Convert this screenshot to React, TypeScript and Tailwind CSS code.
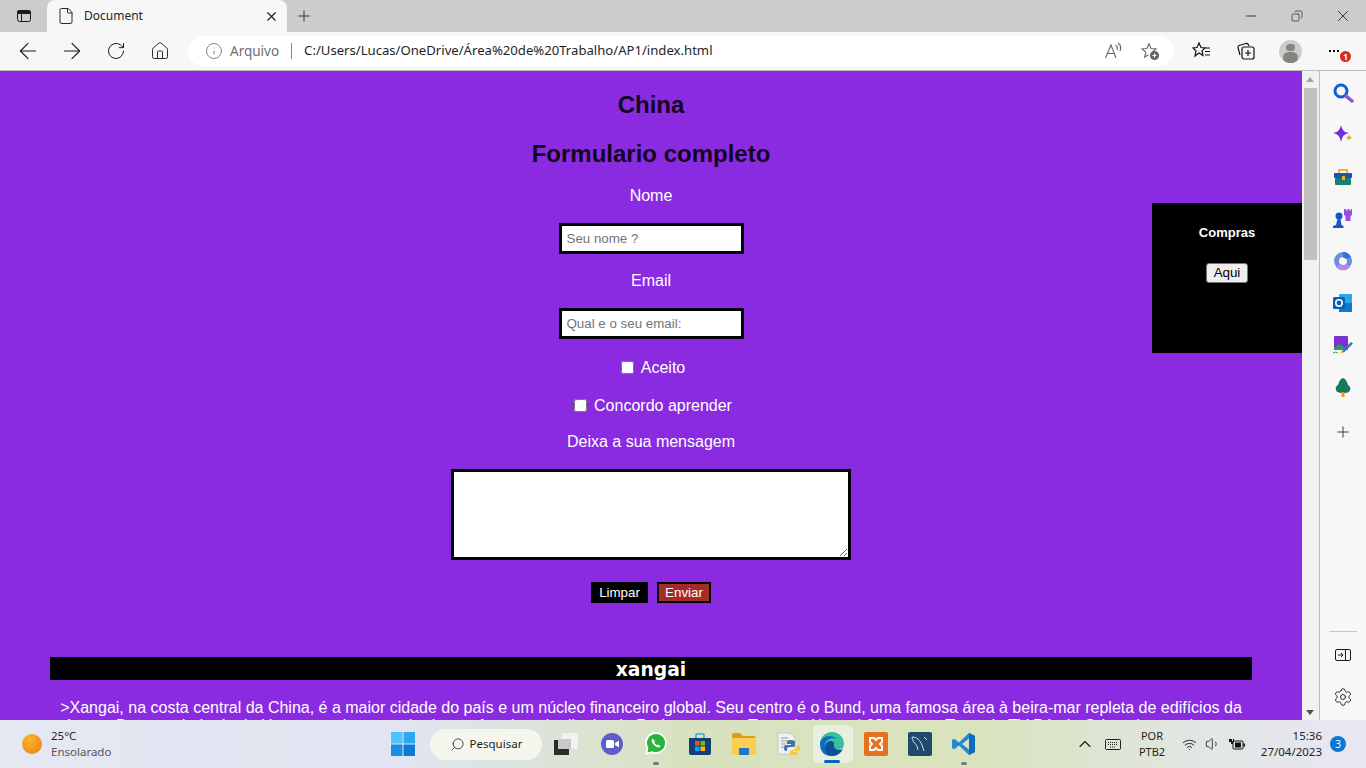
import type { ReactNode } from 'react';
import {
  ArrowLeft,
  ArrowRight,
  ChevronUp,
  Copy,
  File,
  Home,
  Info,
  Minus,
  Plus,
  RotateCw,
  Search,
  Settings,
  Volume1,
  Wifi,
  X,
} from 'lucide-react';

const uiFont = "font-['Noto_Sans','Open_Sans',sans-serif]";

function ToolButton({ children }: { children: ReactNode }) {
  return <div className="flex h-[38px] w-11 shrink-0 items-center justify-center text-[#1b1b1b]">{children}</div>;
}

function TabBar() {
  return (
    <div className="flex h-8 shrink-0 bg-[#cccccc]">
      <div className="flex w-[47px] items-center justify-center">
        <svg width="16" height="16" viewBox="0 0 16 16" fill="none" stroke="#1b1b1b">
          <rect x="1.5" y="2.5" width="13" height="11" rx="2" />
          <path d="M2 5.5h12M5.5 5v8" />
          <rect x="2" y="3" width="12" height="2.5" fill="#1b1b1b" />
        </svg>
      </div>
      <div className="flex h-8 w-60 items-center rounded-t-lg bg-[#f7f7f7] pl-[10px] pr-[8px]">
        <File size={18} strokeWidth={1.25} className="text-[#1b1b1b]" />
        <span className="ml-[9px] flex-1 text-xs text-[#1f1f1f]">Document</span>
        <X size={15} strokeWidth={1.75} className="text-[#1b1b1b]" />
      </div>
      <div className="ml-[8px] flex w-[18px] items-center justify-center">
        <Plus size={22} strokeWidth={1.1} className="text-[#1b1b1b]" />
      </div>
      <div className="ml-auto flex text-[#1b1b1b]">
        <div className="flex w-[46px] items-center justify-center">
          <Minus size={16} strokeWidth={1.25} />
        </div>
        <div className="flex w-[46px] items-center justify-center">
          <Copy size={12} strokeWidth={1.25} className="-scale-x-100" />
        </div>
        <div className="flex w-[46px] items-center justify-center">
          <X size={18} strokeWidth={1.1} />
        </div>
      </div>
    </div>
  );
}

function ToolBar() {
  return (
    <div className="flex h-[38px] shrink-0 items-center bg-[#f7f7f7] pl-[6px]">
      <ToolButton>
        <ArrowLeft size={26} strokeWidth={1} />
      </ToolButton>
      <ToolButton>
        <ArrowRight size={26} strokeWidth={1} />
      </ToolButton>
      <ToolButton>
        <RotateCw size={20} strokeWidth={1.2} />
      </ToolButton>
      <ToolButton>
        <Home size={20} strokeWidth={1.1} />
      </ToolButton>
      <div className="ml-[6px] flex h-[30px] w-[986px] shrink-0 items-center rounded-full bg-white pl-[17px] pr-[14px]">
        <Info size={18} strokeWidth={1.1} className="text-[#6f6f6f]" />
        <span className="ml-[7px] text-[13.5px] text-[#6f6f6f]">Arquivo</span>
        <span className="ml-3 h-4 w-px bg-[#8a8a8a]" />
        <span className="ml-3 text-[13.13px] text-[#1f1f1f]">C:/Users/Lucas/OneDrive/Área%20de%20Trabalho/AP1/index.html</span>
        <div className="ml-auto flex items-center gap-[18px]">
          <svg width="18" height="18" viewBox="0 0 18 18" fill="none" stroke="#666" strokeWidth="1.1">
            <path d="M1.5 16 7 3l5 13M3.5 11.5h7M11.500 3c2 1 2 3.500 1.500 5M14 1c3 2 3 5.500 2 8" />
          </svg>
          <svg width="20" height="20" viewBox="0 0 20 20" fill="none" stroke="#666" strokeWidth="1.1">
            <path d="M9 2.500 11 7.500l5 .4-3.800 3.200" />
            <path d="M9 2.500 7 7.500l-5 .4 3.800 3.200L4.700 16l3.800-2.300" />
            <circle cx="14.500" cy="14.500" r="4" fill="#666" />
            <path d="M14.500 12.500v4M12.500 14.500h4" stroke="#fff" />
          </svg>
        </div>
      </div>
      <div className="ml-[6px] flex items-center">
        <ToolButton>
          <svg width="20" height="20" viewBox="0 0 20 20" fill="none" stroke="#111" strokeWidth="1.2">
            <path d="M7 2 9 6.500l4 .4-3 3 1 4.500-4-2.400-4 3 1-5-3-3 4-.5z" />
            <path d="M13 7h5M13 10.500h5M13 14h5" />
          </svg>
        </ToolButton>
        <ToolButton>
          <svg width="20" height="20" viewBox="0 0 20 20" fill="none" stroke="#111" strokeWidth="1.2">
            <path d="M4 14 2 6.500q-.3-1.500 1-2L10 2.500q1.500-.3 2.200 1L13 5" />
            <rect x="6" y="6" width="12" height="12" rx="2" />
            <path d="M12 9v6M9 12h6" />
          </svg>
        </ToolButton>
        <ToolButton>
          <div className="flex h-[23px] w-[23px] flex-col items-center overflow-hidden rounded-full bg-[#cfcdca]">
            <div className="mt-1 h-[9px] w-[9px] rounded-full bg-[#868481]" />
            <div className="mt-[1px] h-3 w-[15px] rounded-full bg-[#868481]" />
          </div>
        </ToolButton>
        <ToolButton>
          <div className="relative flex items-center gap-[2px]">
            <span className="h-[2px] w-[2px] bg-black" />
            <span className="h-[2px] w-[2px] bg-black" />
            <span className="h-[2px] w-[2px] bg-black" />
            <span className="absolute -right-[12px] top-[1px] flex h-[11px] w-[11px] items-center justify-center rounded-full bg-[#d92a20] text-[9px] font-bold leading-none text-white">
              1
            </span>
          </div>
        </ToolButton>
      </div>
    </div>
  );
}

function PageContent() {
  return (
    <main className="relative h-full flex-1 overflow-hidden bg-[#8a2be2] pt-5 text-center font-['Liberation_Sans',Arial,sans-serif] text-base text-white">
      <h2 className="text-2xl font-bold leading-[27px] text-[#12061c]">China</h2>
      <h2 className="mt-[22px] text-2xl font-bold leading-[27px] text-[#12061c]">Formulario completo</h2>
      <p className="mt-5 leading-[18px]">Nome</p>
      <input
        className="mx-auto mt-[18px] block h-[31px] w-[185px] border-[3px] border-black bg-white px-[5px] pb-[1px] text-[13.33px] text-black placeholder:text-[#757575]"
        placeholder="Seu nome ?"
      />
      <p className="mt-[18px] leading-[18px]">Email</p>
      <input
        className="mx-auto mt-[18px] block h-[31px] w-[185px] border-[3px] border-black bg-white px-[5px] pb-[1px] text-[13.33px] text-black placeholder:text-[#757575]"
        placeholder="Qual e o seu email:"
      />
      <label className="mt-5 flex h-[18px] items-center justify-center gap-[7px] leading-[18px]">
        <input type="checkbox" className="-mt-[2px] ml-1 h-[13px] w-[13px]" />
        Aceito
      </label>
      <label className="mt-5 flex h-[18px] items-center justify-center gap-[7px] leading-[18px]">
        <input type="checkbox" className="-mt-[2px] ml-1 h-[13px] w-[13px]" />
        Concordo aprender
      </label>
      <p className="mt-[18px] leading-[18px]">Deixa a sua mensagem</p>
      <textarea className="mx-auto mt-[18px] block h-[91px] w-[400px] border-[3px] border-black bg-white" />
      <div className="mt-[22px] flex justify-center gap-[9px]">
        <button className="h-[21px] w-[57px] border-2 border-black bg-black text-[13.33px] leading-none text-white">Limpar</button>
        <button className="h-[21px] w-[54px] border-2 border-black bg-[#a52a2a] text-[13.33px] leading-none text-white">Enviar</button>
      </div>
      <h3 className="mx-[50px] mt-[54px] h-[23px] bg-black font-['DejaVu_Sans',sans-serif] text-[18.72px] font-bold leading-[25px] text-white">
        xangai
      </h3>
      <p className="mx-[60px] mt-[19px] leading-[18.4px]">
        &gt;Xangai, na costa central da China, é a maior cidade do país e um núcleo financeiro global. Seu centro é o Bund, uma famosa área à beira-mar repleta de edifícios da
        época. Do outro lado do rio Huangpu, situa-se o horizonte futurista do distrito de Pudong, com a Torre de Xangai 632 m, e a Torre de TV Pérola Oriental e arquitetura.
      </p>
      {/* painel fixo de compras */}
      <aside className="absolute right-0 top-[132px] h-[150px] w-[150px] bg-black pt-[22px] text-white">
        <p className="text-[13px] font-bold leading-[15px]">Compras</p>
        <button className="mt-[23px] h-5 w-[42px] rounded-[3px] border border-[#767676] bg-[#efefef] pb-[1px] text-[13.33px] leading-none text-black">Aqui</button>
      </aside>
    </main>
  );
}

function Scrollbar() {
  return (
    <div className="flex h-full w-[18px] shrink-0 flex-col items-center border-r border-[#bdbdbd] bg-[#f1f1f1] pr-[1px]">
      <div className="mt-[6px] h-0 w-0 border-x-[4px] border-b-[5px] border-x-transparent border-b-[#a3a3a3]" />
      <div className="mt-[6px] h-[172px] w-[13px] bg-[#c1c1c1]" />
      <div className="mb-[5px] mt-auto h-0 w-0 border-x-[4px] border-t-[5px] border-x-transparent border-t-[#505050]" />
    </div>
  );
}

function Sidebar() {
  return (
    <div className="flex h-full w-[46px] shrink-0 flex-col items-center bg-[#f7f7f7] pt-[11px]">
      <div className="flex flex-col items-center gap-[20px]">
        <svg width="22" height="22" viewBox="0 0 22 22" fill="none">
          <circle cx="9" cy="9" r="6" stroke="#0f5fd0" strokeWidth="3" />
          <path d="m14 14 6 5" stroke="#8a4fe0" strokeWidth="3.500" strokeLinecap="round" />
        </svg>
        <svg width="22" height="22" viewBox="0 0 22 22">
          <path d="M9 1q1 7 8 8-7 1-8 9-1-8-8-9 7-1 8-8z" fill="#6d2fe0" />
          <path d="M17 10q.4 3 3.500 3.500-3 .5-3.500 3.500-.5-3-3.500-3.500 3-.5 3.500-3.500z" fill="#f6a81c" />
        </svg>
        <svg width="22" height="22" viewBox="0 0 22 22">
          <path d="M7 7V4h8v3" fill="none" stroke="#e3a21a" strokeWidth="1.500" />
          <rect x="2" y="7" width="18" height="5" rx="1" fill="#1556b8" />
          <rect x="3" y="12" width="16" height="7" rx="1" fill="#16806e" />
          <rect x="10" y="10" width="3" height="4" fill="#f2b21e" />
        </svg>
        <svg width="22" height="22" viewBox="0 0 22 22">
          <path d="M12 1h2v1.500h1.500V1h2v1.500H19V1h1v6l-1.500 1v5h-5V8L12 7V1z" fill="#9a4be8" />
          <circle cx="7" cy="8" r="3.500" fill="#1556c8" />
          <path d="M5.500 11h3l1 6 2 1v2H1v-2l3-1z" fill="#1556c8" />
        </svg>
        <svg width="22" height="22" viewBox="0 0 22 22" fill="none">
          <circle cx="11" cy="11" r="6.500" stroke="#6b8fe0" strokeWidth="5" />
          <path d="M11 2a9 9 0 0 1 8 5l-5 2a3.500 3.500 0 0 0-3-1.500z" fill="#2f6fd8" />
          <path d="M4 17a9 9 0 0 0 14 0l-4-3a3.500 3.500 0 0 1-5 0z" fill="#b58ae6" />
        </svg>
        <svg width="22" height="22" viewBox="0 0 22 22">
          <rect x="7" y="2" width="13" height="18" rx="1" fill="#28a8ea" />
          <path d="M7 11h13v9H7z" fill="#0f78d4" />
          <rect x="1" y="5" width="12" height="12" rx="1.500" fill="#0a5fb8" />
          <circle cx="7" cy="11" r="3.200" fill="none" stroke="#fff" strokeWidth="1.600" />
        </svg>
        <svg width="22" height="22" viewBox="0 0 22 22">
          <rect x="2" y="2" width="14" height="14" rx="1" fill="#7d2fd0" />
          <path d="M2 14l5-4 5 3 4 3H2z" fill="#2e9b55" />
          <path d="M10 17 19 8l2 1.500-9 9z" fill="#3b6fd8" />
          <path d="M9 16.500l3 2-3.500 1z" fill="#f2b21e" />
          <path d="M1 19q3-2 5 0" stroke="#2e9b55" fill="none" />
        </svg>
        <svg width="22" height="22" viewBox="0 0 22 22">
          <path d="M11 2c3 1 4 4 5 7 2 1 3 3 2 5-1 3-4 3-7 3s-6 0-7-3c-1-2 0-4 2-5 1-3 2-6 5-7z" fill="#17775f" />
          <rect x="9.500" y="16" width="3" height="5" fill="#e59a1c" />
        </svg>
      </div>
      <Plus size={18} strokeWidth={1.1} className="mt-[25px] text-[#1b1b1b]" />
      <div className="mt-auto h-px w-7 bg-[#c4c4c4]" />
      <svg className="mt-[15px]" width="18" height="16" viewBox="0 0 18 16" fill="none" stroke="#1b1b1b">
        <rect x="1.500" y="2.500" width="15" height="11" rx="1.500" />
        <path d="M11.500 3v10M4 8h5M7 6l2 2-2 2" />
      </svg>
      <Settings size={20} strokeWidth={1.1} className="mb-[13px] mt-6 text-[#1b1b1b]" />
    </div>
  );
}

function TaskIcon({ children, running, active }: { children: ReactNode; running?: boolean; active?: boolean }) {
  return (
    <div className="relative flex h-[48px] w-11 shrink-0 items-center justify-center">
      {active && <span className="absolute inset-x-[3px] inset-y-[5px] rounded bg-[#e9efdf]" />}
      {active && <span className="absolute inset-y-[7px] right-[1px] w-[2px] rounded-r bg-[#e9efdf]" />}
      <div className="relative flex items-center justify-center">{children}</div>
      {running && <span className="absolute bottom-[3px] h-[3px] w-[6px] rounded-full bg-[#7a7a7a]" />}
      {active && <span className="absolute bottom-[5px] h-[3px] w-4 rounded-full bg-[#0067c0]" />}
    </div>
  );
}

function Taskbar() {
  return (
    <footer className={`flex h-12 shrink-0 items-center bg-[linear-gradient(90deg,#e3e8f3_0%,#e0e5f1_30%,#d8e2c0_50%,#d9e3bd_72%,#e2e6e4_88%,#e7e7f3_100%)] text-[#1f1f1f] ${uiFont}`}>
      <div className="flex w-[381px] shrink-0 items-center pl-[22px]">
        <div className="h-[20px] w-[20px] rounded-full bg-[radial-gradient(circle_at_40%_30%,#f7b52c,#ef7d10)]" />
        <div className="ml-[9px] text-[11.5px] leading-4">
          <div>25°C</div>
          <div className="text-[#555]">Ensolarado</div>
        </div>
      </div>
      <TaskIcon>
        <svg width="24" height="24" viewBox="0 0 24 24">
          <rect x="0" y="0" width="11.500" height="11.500" fill="#4cc2ff" />
          <rect x="12.500" y="0" width="11.500" height="11.500" fill="#2aa8f0" />
          <rect x="0" y="12.500" width="11.500" height="11.500" fill="#1a8ee0" />
          <rect x="12.500" y="12.500" width="11.500" height="11.500" fill="#0f78d4" />
        </svg>
      </TaskIcon>
      <div className="ml-[5px] flex h-[31px] w-28 shrink-0 items-center justify-center gap-[5px] rounded-full bg-[#f5f7ef] text-[11.5px]">
        <Search size={15} strokeWidth={1.25} className="-scale-x-100" />
        Pesquisar
      </div>
      <div className="ml-[2px] flex">
        <TaskIcon>
          <div className="relative h-[22px] w-6">
            <span className="absolute left-[8px] top-0 h-[16px] w-4 bg-[#f2f2f2]" />
            <span className="absolute bottom-0 left-0 h-[15px] w-[15px] bg-[#2b2b2b]" />
            <span className="absolute left-[4px] top-[6px] h-[10px] w-[13px] bg-[#c9c9c9]" />
          </div>
        </TaskIcon>
        <div className="flex pl-[2px]">
          <TaskIcon>
            <svg width="24" height="24" viewBox="0 0 24 24">
              <circle cx="12" cy="12" r="11" fill="#5e5cc8" />
              <rect x="6" y="8" width="8" height="8" rx="1.500" fill="#fff" />
              <path d="M15 11l4-2.500v7L15 13z" fill="#fff" />
            </svg>
          </TaskIcon>
          <TaskIcon running>
            <svg width="24" height="26" viewBox="0 0 24 26">
              <path d="M12 1a11 11 0 0 0-9.500 16.500L1 24l6.700-1.700A11 11 0 1 0 12 1z" fill="#fff" />
              <path d="M12 3a9 9 0 0 0-7.700 13.700L3.500 21.500l4.800-1.300A9 9 0 1 0 12 3z" fill="#29b43f" />
              <path d="M8.500 7.500c-1.500 1.500-1 4 1.500 6.500s5 3 6.500 1.500l-2-2-1.500.7c-1-.4-2.300-1.700-2.700-2.700l.7-1.500z" fill="#fff" />
            </svg>
          </TaskIcon>
          <TaskIcon>
            <svg width="24" height="24" viewBox="0 0 24 24">
              <path d="M8 6V3q0-1 1-1h6q1 0 1 1v3" fill="none" stroke="#28a8ea" strokeWidth="1.500" />
              <path d="M1 6h22v15q0 2-2 2H3q-2 0-2-2z" fill="#123f7a" />
              <rect x="7" y="9" width="4.500" height="4.500" fill="#f25022" />
              <rect x="12.500" y="9" width="4.500" height="4.500" fill="#7fba00" />
              <rect x="7" y="14.500" width="4.500" height="4.500" fill="#00a4ef" />
              <rect x="12.500" y="14.500" width="4.500" height="4.500" fill="#ffb900" />
            </svg>
          </TaskIcon>
          <TaskIcon>
            <svg width="24" height="22" viewBox="0 0 24 22">
              <path d="M0 2q0-2 2-2h6l3 3h11q2 0 2 2v2H0z" fill="#d99e16" />
              <path d="M0 5h24v15q0 2-2 2H2q-2 0-2-2z" fill="#f8cf52" />
              <rect x="7" y="15" width="10" height="7" rx="1" fill="#1a78d0" />
            </svg>
          </TaskIcon>
          <TaskIcon>
            <svg width="24" height="24" viewBox="0 0 24 24">
              <path d="M2 1h12l5 5v16H2z" fill="#f1f1f1" stroke="#c8c8c8" />
              <path d="M5 6h7M5 9h9M5 12h5M5 15h5" stroke="#9a9a9a" />
              <path d="M15 8q-4 0-4 2v2h4v1H10q-2 0-2 3t2 3h1v-2q0-2 3-2h3q2 0 2-2v-3q0-2-4-2z" fill="#3a76a8" />
              <path d="M21 13v3q0 2-2 2h-3q-2 0-2 2v2q0 1 3 1t4-1v-2h-4v-1h5q2 0 2-3t-2-3z" fill="#f2c83a" />
            </svg>
          </TaskIcon>
          <TaskIcon active>
            <svg width="26" height="26" viewBox="0 0 26 26">
              <path d="M1 13a12 12 0 0 1 24 0c0 4-3 6-6 6-4 0-5-2-4-4 .5-1 .5-4-3-4-4 0-6 3-6 6z" fill="#35c1a0" />
              <path d="M1 13c0-4 4-8 9-8 6 0 8 3 8 3-2-1-10-2-12 5-1 5 3 10 9 11-1 .5-2 1-3 1C5 25 1 20 1 13z" fill="#0c6cc4" />
              <path d="M6 17c0-5 3-7 6-7 4 0 3 4 3 5 0 3 3 4 6 4 1 0 2-.5 3-1-2 4-6 7-10 7-5 0-8-4-8-8z" fill="#0d4f9e" />
            </svg>
          </TaskIcon>
          <TaskIcon>
            <svg width="24" height="24" viewBox="0 0 24 24">
              <rect width="24" height="24" rx="2" fill="#e8701f" />
              <path d="M6 6h4l2 2 2-2h4v4l-2 2 2 2v4h-4l-2-2-2 2H6v-4l2-2-2-2z" fill="none" stroke="#fff" strokeWidth="2" />
            </svg>
          </TaskIcon>
          <TaskIcon>
            <svg width="24" height="24" viewBox="0 0 24 24">
              <rect width="24" height="24" rx="2" fill="#1f4a6e" />
              <path d="M4 5c5 0 8 3 10 8l2 6M4 5c0 4 3 6 5 9l1 4M16 5l3 3" fill="none" stroke="#cfdde8" />
            </svg>
          </TaskIcon>
          <TaskIcon running>
            <svg width="24" height="24" viewBox="0 0 24 24">
              <path d="M17 1 23 4v16l-6 3L7 13.500 2 17.500 0 16V8l2-1.500 5 4z" fill="#1f8ad2" />
              <path d="M17 6.500 10 12l7 5.500z" fill="#d9e3bd" />
              <path d="M17 1 23 4v16l-6 3z" fill="#0f6cbd" />
            </svg>
          </TaskIcon>
        </div>
      </div>
      <div className="ml-[88px] flex w-[22px] justify-center">
        <ChevronUp size={20} strokeWidth={1.4} />
      </div>
      <div className="ml-[9px] flex w-[16px] justify-center">
        <svg width="16" height="11" viewBox="0 0 16 11" fill="none" stroke="#1f1f1f">
          <rect x="0.500" y="0.500" width="15" height="10" rx="1" />
          <path d="M3 3.500h10M3 5.500h10M5 8h6" strokeDasharray="1 1" />
        </svg>
      </div>
      <div className="ml-[7px] w-[48px] text-center text-[11px] leading-[16px]">
        <div>POR</div>
        <div>PTB2</div>
      </div>
      <div className="ml-[6px] flex items-center gap-2">
        <Wifi size={15} strokeWidth={1.5} />
        <Volume1 size={16} strokeWidth={1.25} />
        <svg width="16" height="12" viewBox="0 0 16 12">
          <path d="M0 1h3v2h1V1h1v3H4v2H2V4H0z" fill="#111" />
          <rect x="4" y="3" width="10" height="8" rx="1" fill="none" stroke="#111" />
          <rect x="6" y="4.500" width="6" height="5" fill="#111" />
          <rect x="14.500" y="5.500" width="1.500" height="3" fill="#111" />
        </svg>
      </div>
      <div className="ml-auto text-right text-[11.5px] leading-[16px]">
        <div>15:36</div>
        <div>27/04/2023</div>
      </div>
      <div className="ml-[8px] mr-[20px] flex h-4 w-4 items-center justify-center rounded-full bg-[#0c78d4] text-[10px] text-white">3</div>
    </footer>
  );
}

export default function App() {
  return (
    <div className="flex h-screen w-full flex-col overflow-hidden">
      <div className={uiFont}>
        <TabBar />
        <ToolBar />
      </div>
      <div className="flex min-h-0 flex-1 border-t border-[#bdbdbd]">
        <PageContent />
        <Scrollbar />
        <Sidebar />
      </div>
      <Taskbar />
    </div>
  );
}
